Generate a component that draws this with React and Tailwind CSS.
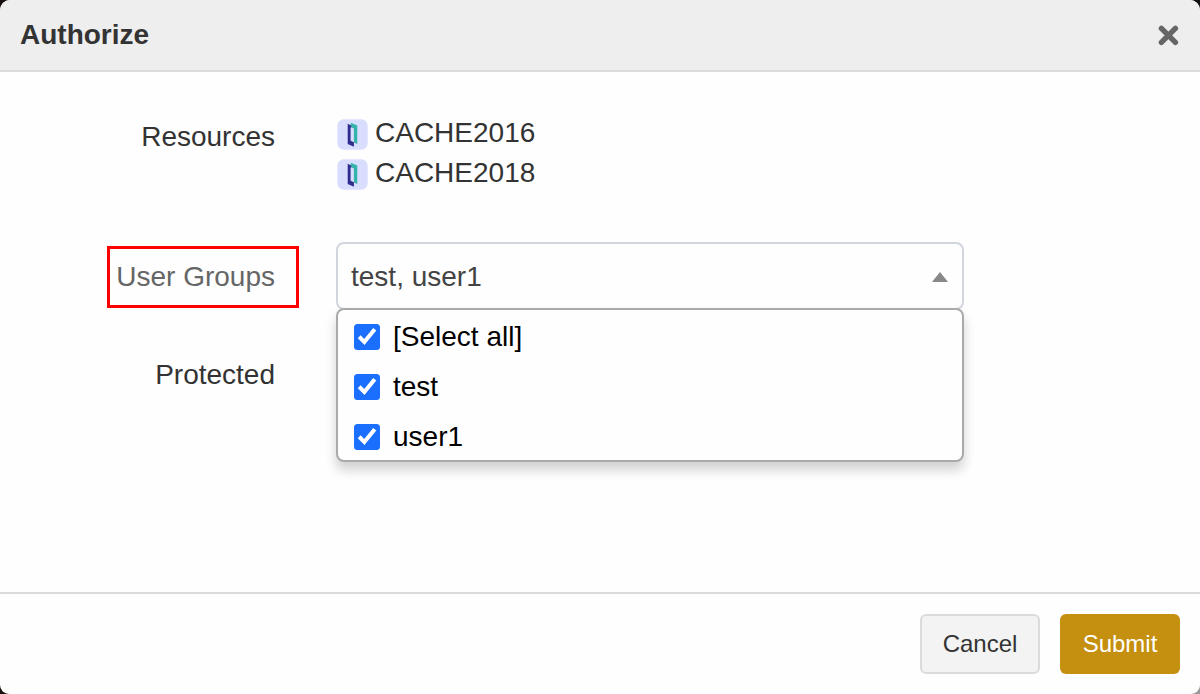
import React from "react";

const resources = ["CACHE2016", "CACHE2018"];
const options = ["[Select all]", "test", "user1"];

function ResourceIcon() {
  return (
    <svg className="mt-[6px] block h-[31px] w-[31px] shrink-0" viewBox="0 0 31 31" aria-hidden="true">
      <rect x="0.3" y="0.3" width="30.4" height="30.4" rx="6.5" fill="#dadefe" />
      <path d="M13.8 3.7 L20.3 6.6 V25 L16.9 23.4 V9.4 L13.8 8 Z" fill="#34b4ab" />
      <path d="M10.7 4.8 L14.2 6.5 V8.8 L13.6 8.6 V21.8 L16.9 23.2 V27.8 L10.7 25 Z" fill="#2f2d90" />
    </svg>
  );
}

function CheckedBox() {
  return (
    <svg className="block h-[26px] w-[26px] shrink-0" viewBox="0 0 26 26" aria-hidden="true">
      <rect width="26" height="26" rx="3.5" fill="#1a6fff" />
      <path d="M3.8 14.2 L6.6 11.3 L10.2 15 L19.2 4 L22.3 6.4 L10.5 21 Z" fill="#fff" />
    </svg>
  );
}

function Label({ children }) {
  return <div className="w-[275px] shrink-0 text-right text-[28px] leading-10">{children}</div>;
}

export default function App() {
  return (
    <div className="flex h-[694px] w-[1200px] bg-[conic-gradient(#111_25%,#999_25%_50%,#17100f_50%)]">
      <div
        className="flex h-full w-full flex-col overflow-hidden rounded-t-[10px] rounded-b-[9px] bg-[#fefefe] text-[#333]"
        style={{ fontFamily: '"Liberation Sans", Arial, sans-serif' }}
      >
        <header className="flex h-[72px] shrink-0 items-center justify-between border-b-2 border-[#dbdbdb] bg-[#eee] pl-5 pr-[21px]">
          <h1 className="text-[28px] font-bold leading-10">Authorize</h1>
          <button type="button" aria-label="Close" className="mt-px">
            <svg className="block h-[21px] w-[21px]" viewBox="0 0 21 21">
              <path d="M3.4 3.4 L17.4 17.4 M17.4 3.4 L3.4 17.4" stroke="#666" strokeWidth="5.4" strokeLinecap="round" />
            </svg>
          </button>
        </header>

        <main className="flex-1 pt-[41px]">
          <div className="flex h-20">
            <div className="pt-1">
              <Label>Resources</Label>
            </div>
            <ul className="ml-[62px]">
              {resources.map((name) => (
                <li key={name} className="flex h-10 gap-[7px] text-[28px] leading-10">
                  <ResourceIcon />
                  <span>{name}</span>
                </li>
              ))}
            </ul>
          </div>

          <div className="mt-[49px] flex h-[68px]">
            <div className="ml-[107px] mt-1 flex h-[62px] w-[192px] items-center justify-end border-[3px] border-[#f00] pr-[21px] text-[28px] leading-10 whitespace-nowrap text-[#666]">
              User Groups
            </div>
            <div className="relative ml-[37px] h-[68px] w-[628px]">
              <div className="flex h-full items-center justify-between rounded-lg border-2 border-[#d1d5de] bg-[#fefefe] pl-[13px] pr-[14px] text-[28px] leading-10 text-[#444]">
                <span className="pt-[2px]">test, user1</span>
                <svg className="mt-[2px] block h-[10px] w-4" viewBox="0 0 16 10">
                  <path d="M8 0 L16 10 H0 Z" fill="#888" />
                </svg>
              </div>
              <ul className="absolute left-0 top-[66px] z-10 h-[154px] w-full overflow-hidden rounded-lg border-2 border-[#aaa] bg-[#fefefe] pt-[2px] text-black shadow-[0_8px_12px_rgba(0,0,0,0.18)]">
                {options.map((name) => (
                  <li key={name} className="flex h-[50px] items-center gap-[13px] pl-4 text-[28px] leading-10">
                    <CheckedBox />
                    <span>{name}</span>
                  </li>
                ))}
              </ul>
            </div>
          </div>

          <div className="mt-[45px]">
            <Label>Protected</Label>
          </div>
        </main>

        <footer className="flex h-[102px] shrink-0 items-start justify-end gap-5 border-t-2 border-[#dbdbdb] px-5 pt-5">
          <button type="button" className="h-[60px] w-[120px] rounded-md border-2 border-[#dbdbdb] bg-[#f3f3f3] text-2xl">
            Cancel
          </button>
          <button type="button" className="h-[60px] w-[120px] rounded-md bg-[#c58f0f] text-2xl text-white">
            Submit
          </button>
        </footer>
      </div>
    </div>
  );
}
